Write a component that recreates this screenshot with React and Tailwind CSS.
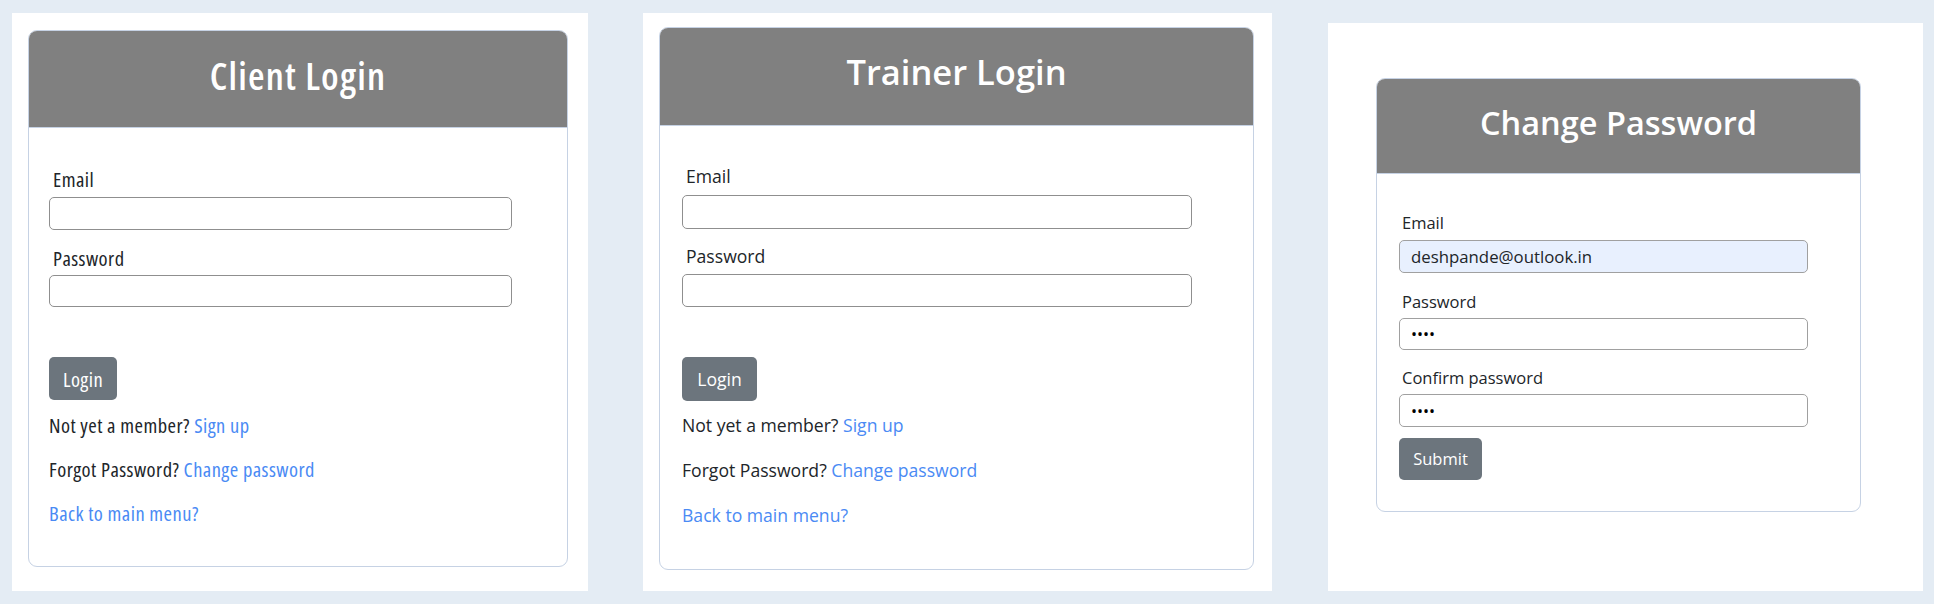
import React from "react";

const font = { fontFamily: '"Open Sans", "Noto Sans", sans-serif' };

function LoginCard({ title, v }) {
  return (
    <div className={v.card}>
      <div className={v.header}>
        <h1 className={v.title}>{title}</h1>
      </div>
      <div className={v.body}>
        <label className={v.label1}>Email</label>
        <input type="email" className={v.input1} />
        <label className={v.label2}>Password</label>
        <input type="password" className={v.input2} />
        <button className={v.button}>Login</button>
        <p className={v.row1}>
          Not yet a member? <a className="text-[#4a8af4]">Sign up</a>
        </p>
        <p className={v.row2}>
          Forgot Password? <a className="text-[#4a8af4]">Change password</a>
        </p>
        <p className={v.row3}>
          <a className="text-[#4a8af4]">Back to main menu?</a>
        </p>
      </div>
    </div>
  );
}

const v1 = {
  card: "ml-[16px] mt-[17px] w-[540px] rounded-[9px] border border-[#c6d2e4] overflow-hidden bg-white",
  header: "h-[97px] bg-[#808080] border-b border-[#c6d2e4] flex items-center justify-center pb-[8px]",
  title: "text-white text-[38px] leading-[36px] font-semibold font-stretch-condensed tracking-[1.2px]",
  body: "flex flex-col items-start pl-[20px] pt-[39px] pb-[41px] text-[20.5px] leading-[24px] text-[#212529] font-stretch-condensed tracking-[0.45px]",
  label1: "ml-[4px]",
  input1: "mt-[6px] w-[463px] h-[33px] rounded-[5px] border border-[#8f8f8f] bg-white",
  label2: "ml-[4px] mt-[16px]",
  input2: "mt-[5px] w-[463px] h-[32px] rounded-[5px] border border-[#8f8f8f] bg-white",
  button: "mt-[50px] w-[68px] h-[43px] rounded-[5px] bg-[#6c757d] text-white",
  row1: "mt-[13px]",
  row2: "mt-[20px]",
  row3: "mt-[20px]",
};

const v2 = {
  card: "ml-[16px] mt-[14px] w-[595px] rounded-[9px] border border-[#c6d2e4] overflow-hidden bg-white",
  header: "h-[98px] bg-[#808080] border-b border-[#c6d2e4] flex items-center justify-center pb-[9px]",
  title: "text-white text-[34.5px] leading-[36px] font-semibold",
  body: "flex flex-col items-start pl-[22px] pt-[38px] pb-[42px] text-[17.6px] leading-[24px] text-[#212529]",
  label1: "ml-[4px]",
  input1: "mt-[7px] w-[510px] h-[34px] rounded-[5px] border border-[#8f8f8f] bg-white",
  label2: "ml-[4px] mt-[15px]",
  input2: "mt-[6px] w-[510px] h-[33px] rounded-[5px] border border-[#8f8f8f] bg-white",
  button: "mt-[50px] w-[75px] h-[44px] rounded-[5px] bg-[#6c757d] text-white",
  row1: "mt-[12px]",
  row2: "mt-[21px]",
  row3: "mt-[21px]",
};

function ChangeCard() {
  return (
    <div className="ml-[48px] mt-[55px] w-[485px] rounded-[9px] border border-[#c6d2e4] overflow-hidden bg-white">
      <div className="h-[95px] bg-[#808080] border-b border-[#c6d2e4] flex items-center justify-center pb-[7px]">
        <h1 className="text-white text-[32.5px] leading-[32px] font-semibold">Change Password</h1>
      </div>
      <div className="flex flex-col items-start pl-[22px] pt-[39px] pb-[31px] text-[16.5px] leading-[20px] text-[#212529]">
        <label className="ml-[3px]">Email</label>
        <input
          type="email"
          readOnly
          value="deshpande@outlook.in"
          className="mt-[7px] w-[409px] h-[33px] rounded-[5px] border border-[#a0a0a0] bg-[#e8f0fe] px-[11px] text-[16.8px] text-[#212529] outline-none"
          style={font}
        />
        <label className="ml-[3px] mt-[19px]">Password</label>
        <input
          type="password"
          readOnly
          value="abcd"
          className="mt-[6px] w-[409px] h-[32px] rounded-[5px] border border-[#a0a0a0] bg-white px-[11px] text-[16px] text-black outline-none"
        />
        <label className="ml-[3px] mt-[18px]">Confirm password</label>
        <input
          type="password"
          readOnly
          value="abcd"
          className="mt-[6px] w-[409px] h-[33px] rounded-[5px] border border-[#a0a0a0] bg-white px-[11px] text-[16px] text-black outline-none"
        />
        <button className="mt-[11px] w-[83px] h-[42px] rounded-[5px] bg-[#6c757d] text-white">Submit</button>
      </div>
    </div>
  );
}

export default function App() {
  return (
    <div className="min-h-screen w-full bg-[#e4ecf4] flex items-start pl-[12px] pt-[13px]" style={font}>
      <div className="w-[576px] h-[578px] bg-white flex flex-col">
        <LoginCard title="Client Login" v={v1} />
      </div>
      <div className="ml-[55px] w-[629px] h-[578px] bg-white flex flex-col">
        <LoginCard title="Trainer Login" v={v2} />
      </div>
      <div className="ml-[56px] mt-[10px] w-[595px] h-[568px] bg-white flex flex-col">
        <ChangeCard />
      </div>
    </div>
  );
}
